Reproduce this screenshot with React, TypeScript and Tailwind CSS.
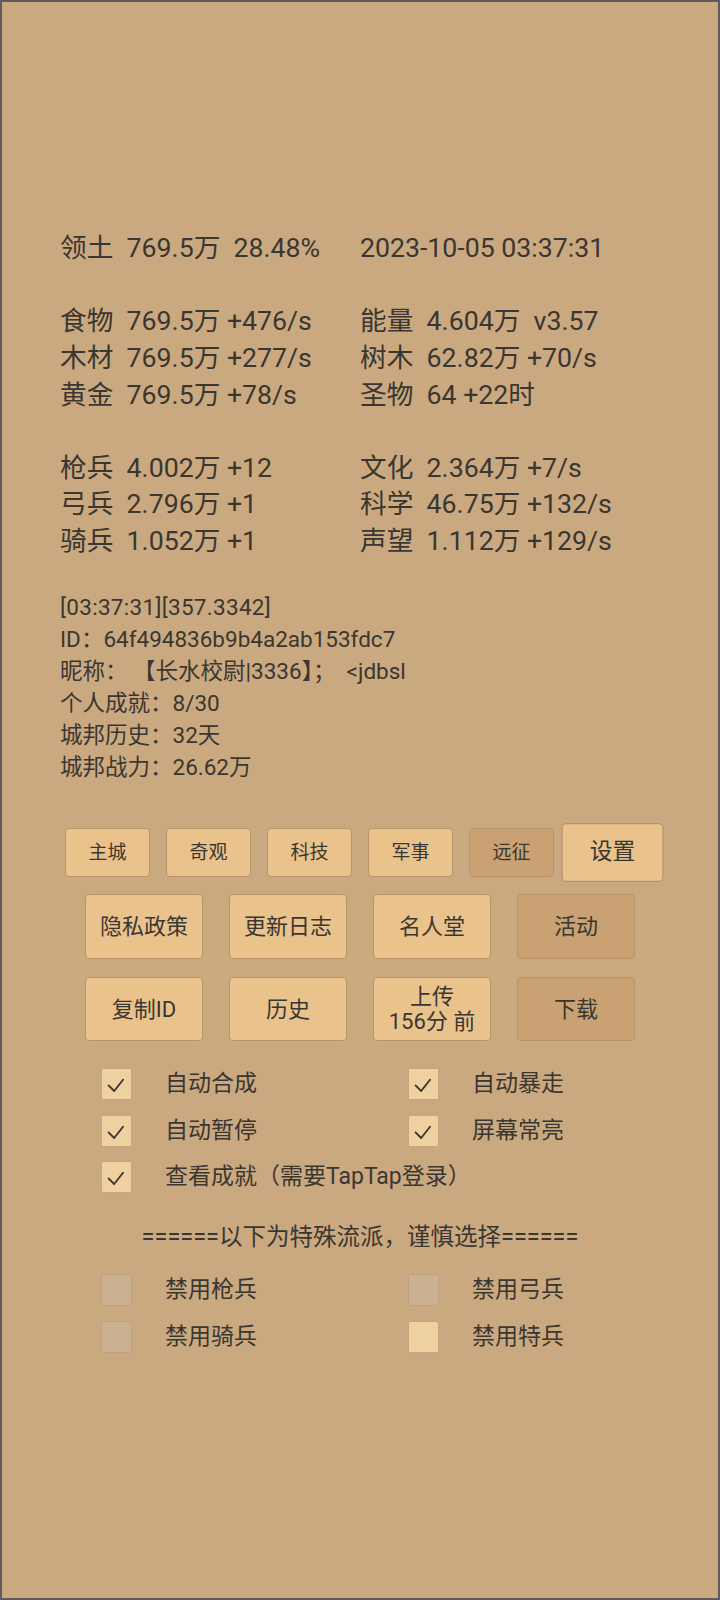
import React from "react";

const Stat = ({ l, r }: { l: string; r: string }) => (
  <div className="flex h-[36.6px] items-center">
    <div className="w-[300px] whitespace-pre">{l}</div>
    <div className="whitespace-pre">{r}</div>
  </div>
);

const Btn = ({
  children,
  dark,
  className = "",
}: {
  children: React.ReactNode;
  dark?: boolean;
  className?: string;
}) => (
  <div
    className={
      "flex items-center justify-center rounded-[4px] border border-[#b8946a] text-center " +
      (dark ? "bg-[#c9a172] " : "bg-[#eac28c] ") +
      className
    }
  >
    {children}
  </div>
);

const Check = ({ state, label }: { state: "on" | "off" | "dis"; label: string }) => (
  <div className="flex h-[32px] w-[307px] items-center">
    <div
      className={
        "flex h-[32px] w-[31px] shrink-0 items-center justify-center rounded-[2px] border " +
        (state === "dis"
          ? "border-[#bfa283] bg-[#ccb092]"
          : "border-[#c7a578] bg-[#efd0a0]")
      }
    >
      {state === "on" && (
        <svg width="31" height="32" viewBox="0 0 31 32">
          <polyline
            points="7,17.5 13,23.5 22.5,11.5"
            fill="none"
            stroke="#3b3630"
            strokeWidth="2"
            strokeLinecap="round"
            strokeLinejoin="round"
          />
        </svg>
      )}
    </div>
    <div className="ml-[33px] whitespace-nowrap text-[23px]">{label}</div>
  </div>
);

export default function App() {
  return (
    <div className="box-border h-[1600px] w-[720px] border-2 border-[#5d5a5c] bg-[#caa980] font-['Roboto','Noto_Sans_CJK_SC',sans-serif] text-[#3a3631]">
      <div className="pl-[58px] pt-[228px] text-[26.7px]">
        <Stat l="领土  769.5万  28.48%" r="2023-10-05 03:37:31" />
        <div className="h-[36.6px]" />
        <Stat l="食物  769.5万 +476/s" r="能量  4.604万  v3.57" />
        <Stat l="木材  769.5万 +277/s" r="树木  62.82万 +70/s" />
        <Stat l="黄金  769.5万 +78/s" r="圣物  64 +22时" />
        <div className="h-[36.6px]" />
        <Stat l="枪兵  4.002万 +12" r="文化  2.364万 +7/s" />
        <Stat l="弓兵  2.796万 +1" r="科学  46.75万 +132/s" />
        <Stat l="骑兵  1.052万 +1" r="声望  1.112万 +129/s" />
      </div>

      <div className="mt-[32px] pl-[58px] text-[22.5px] leading-[32px]">
        <div className="tracking-[0.3px]">[03:37:31][357.3342]</div>
        <div>ID：64f494836b9b4a2ab153fdc7</div>
        <div className="whitespace-pre">昵称： 【长水校尉|3336】；  &lt;jdbsl</div>
        <div>个人成就：8/30</div>
        <div>城邦历史：32天</div>
        <div>城邦战力：26.62万</div>
      </div>

      <div className="mt-[45px] flex justify-center gap-[16px] text-[19px]">
        <Btn className="h-[49px] w-[85px]">主城</Btn>
        <Btn className="h-[49px] w-[85px]">奇观</Btn>
        <Btn className="h-[49px] w-[85px]">科技</Btn>
        <Btn className="h-[49px] w-[85px]">军事</Btn>
        <Btn className="h-[49px] w-[85px]" dark>
          远征
        </Btn>
        <Btn className="h-[49px] w-[85px] scale-[1.2]">设置</Btn>
      </div>

      <div className="mt-[17px] flex justify-center gap-[26px] text-[22px]">
        <Btn className="h-[65px] w-[118px]">隐私政策</Btn>
        <Btn className="h-[65px] w-[118px]">更新日志</Btn>
        <Btn className="h-[65px] w-[118px]">名人堂</Btn>
        <Btn className="h-[65px] w-[118px]" dark>
          活动
        </Btn>
      </div>

      <div className="mt-[18px] flex justify-center gap-[26px] text-[22px]">
        <Btn className="h-[64px] w-[118px]">复制ID</Btn>
        <Btn className="h-[64px] w-[118px]">历史</Btn>
        <Btn className="h-[64px] w-[118px] leading-[25px]">
          <div>
            上传
            <br />
            156分 前
          </div>
        </Btn>
        <Btn className="h-[64px] w-[118px]" dark>
          下载
        </Btn>
      </div>

      <div className="mt-[27px] flex flex-col gap-[14.5px] pl-[99px]">
        <div className="flex">
          <Check state="on" label="自动合成" />
          <Check state="on" label="自动暴走" />
        </div>
        <div className="flex">
          <Check state="on" label="自动暂停" />
          <Check state="on" label="屏幕常亮" />
        </div>
        <div className="flex">
          <Check state="on" label="查看成就（需要TapTap登录）" />
        </div>
      </div>

      <div className="mt-[28px] h-[32px] whitespace-nowrap text-center text-[23.5px] leading-[32px]">
        ======以下为特殊流派，谨慎选择======
      </div>

      <div className="mt-[21px] flex flex-col gap-[15px] pl-[99px]">
        <div className="flex">
          <Check state="dis" label="禁用枪兵" />
          <Check state="dis" label="禁用弓兵" />
        </div>
        <div className="flex">
          <Check state="dis" label="禁用骑兵" />
          <Check state="off" label="禁用特兵" />
        </div>
      </div>
    </div>
  );
}
